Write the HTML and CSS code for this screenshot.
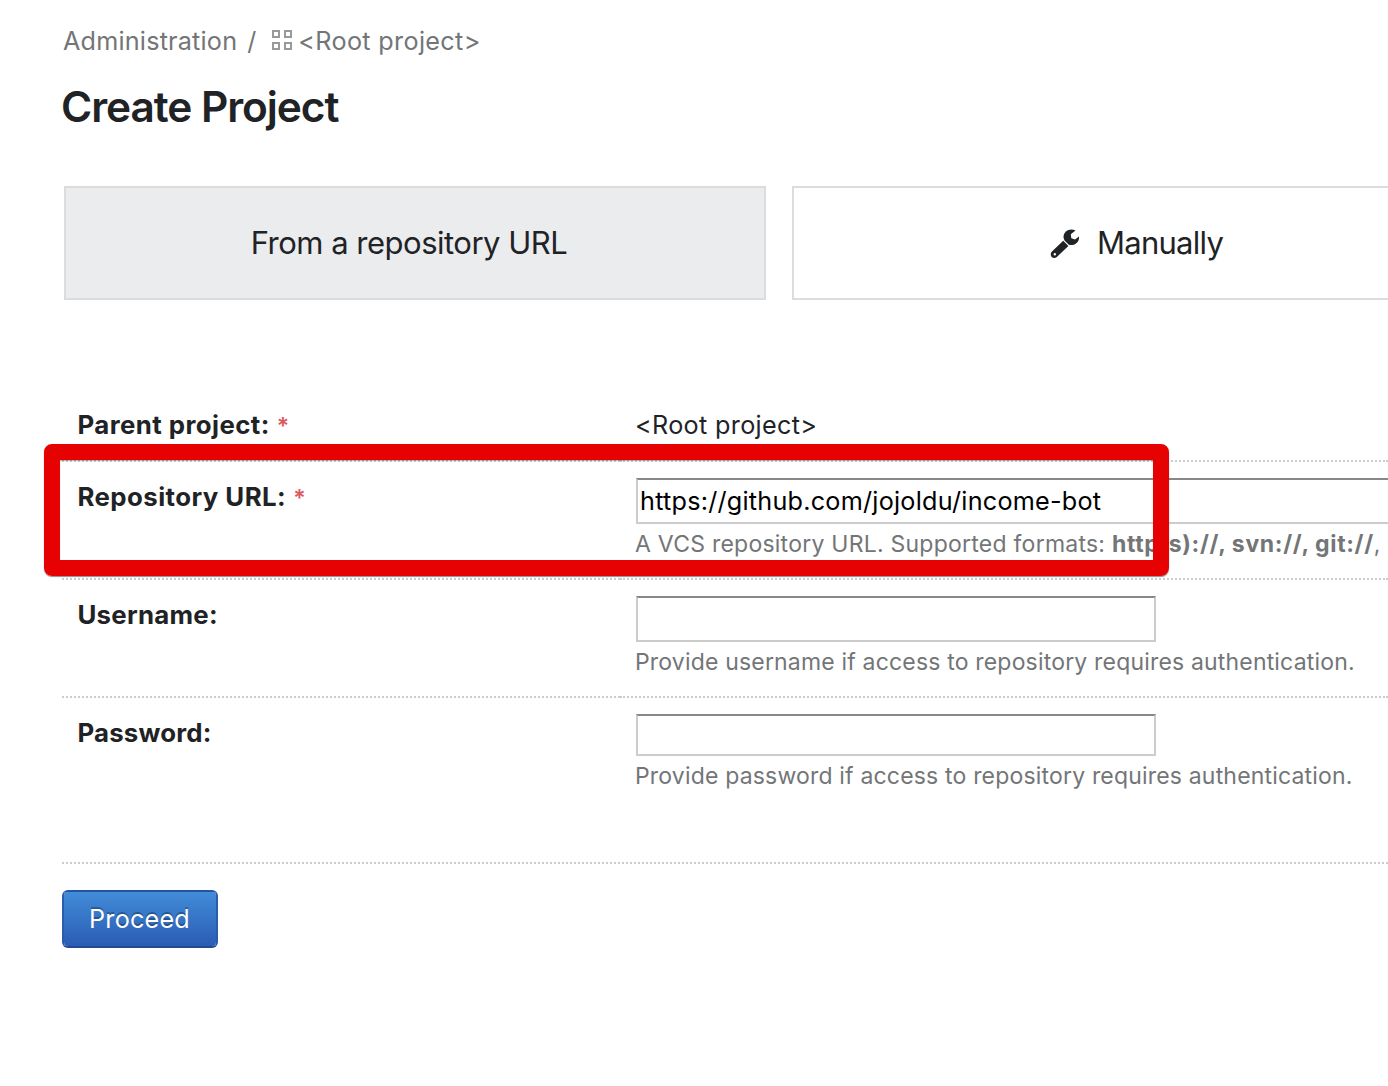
FILE: index.html
```html
<!DOCTYPE html>
<html lang="en">
<head>
<meta charset="utf-8">
<title>Create Project</title>
<link rel="stylesheet" href="styles.css">
</head>
<body>
<main class="page">
  <nav class="breadcrumbs">
    <a class="crumb crumb-admin">Administration</a>
    <span class="separator">/</span>
    <svg class="project-icon" width="22" height="22" viewBox="0 0 22 22" fill="none" stroke="#999" stroke-width="2"><path d="M2 2h6v6H2zM14 2h6v6h-6zM2 14h6v6H2zM14 14h6v6h-6z"/></svg>
    <a class="crumb crumb-root">&lt;Root project&gt;</a>
  </nav>
  <h1 class="title">Create Project</h1>
  <div class="modes">
    <a class="mode mode-selected"><span class="mode-url">From a repository URL</span></a>
    <a class="mode mode-manual">
      <svg class="wrench" width="30" height="30" viewBox="0 0 30 30"><path fill="#1f2326" fill-rule="evenodd" d="M13.200 11.800L18.400 16.900 6.600 28.200Q4 30 1.600 27.900-.2 25.200 1.700 22.800ZM4.800 24.100a1.200 1.200 0 1 0 0 2.400 1.200 1.200 0 0 0 0-2.400Z"/><path fill="#1f2326" d="M25.500 1.600C20-1.200 13.400 2 13.500 8.400L14.500 11.600 18.800 15.800C25 17.300 29.600 13 29 7.600L25 10.400 21.300 9.200 20.800 5.200Z"/></svg>
      <span class="mode-manual-text">Manually</span>
    </a>
  </div>
  <form class="form">
    <div class="row row-parent">
      <div class="label"><span class="t-parent">Parent project:</span><span class="required">*</span></div>
      <div class="value"><span class="parent-name">&lt;Root project&gt;</span></div>
    </div>
    <div class="row row-url">
      <div class="label"><span class="t-url">Repository URL:</span><span class="required">*</span></div>
      <div class="value">
        <input class="field field-url" type="text" value="https://github.com/jojoldu/income-bot">
        <div class="hint"><span class="hint-url">A VCS repository URL. Supported formats: </span><b class="formats">http(s)://, svn://, git://</b>,</div>
      </div>
    </div>
    <div class="row row-user">
      <div class="label"><span class="t-user">Username:</span></div>
      <div class="value">
        <input class="field" type="text">
        <div class="hint hint-user">Provide username if access to repository requires authentication.</div>
      </div>
    </div>
    <div class="row row-password">
      <div class="label"><span class="t-pass">Password:</span></div>
      <div class="value">
        <input class="field field-password" type="password">
        <div class="hint hint-password">Provide password if access to repository requires authentication.</div>
      </div>
    </div>
    <button class="proceed" type="button">Proceed</button>
    <div class="highlight"></div>
  </form>
</main>
</body>
</html>
```
FILE: styles.css
```css
* { box-sizing: border-box; }
body {
  margin: 0;
  height: 1086px;
  overflow: hidden;
  background: #fff;
  color: #1f2326;
  font: 25.2px/32px Inter, "Liberation Sans", sans-serif;
}
.page { width: 100%; height: 1086px; overflow: hidden; padding: 25px 0 0 62px; }
.breadcrumbs { display: flex; height: 32px; padding-left: 1px; color: #737577; }
.crumb-admin { letter-spacing: .2px; }
.crumb-root, .parent-name { letter-spacing: .33px; }
.parent-name { margin-left: -1px; }
.separator { margin-left: 10px; }
.project-icon { margin: 4px 5px 0 15px; }
.title { margin: 23px 0 0 -1px; height: 54px; font-size: 42.4px; line-height: 53px; font-weight: 600; letter-spacing: -1.05px; white-space: nowrap; }
.modes { display: flex; gap: 26px; margin: 52px 0 0 2px; }
.mode {
  display: flex;
  flex: none;
  justify-content: center;
  width: 702px;
  height: 114px;
  padding-right: 12px;
  border: 2px solid #dbdcdd;
  font-size: 31px;
  line-height: 110px;
  white-space: nowrap;
}
.mode-selected { background: #ebecee; }
.mode-url { letter-spacing: -.5px; }
.mode-manual-text { letter-spacing: -.75px; }
.mode-manual { justify-content: flex-start; padding-left: 256px; }
.wrench { margin: 41px 17px 0 0; flex: none; }
.form { position: relative; margin-top: 92px; }
.row { display: grid; grid-template-columns: 558px 1fr; }
.label, .value { min-width: 0; padding: 16px 0 0 16px; border-bottom: 2px dotted #ccc; white-space: nowrap; }
.label { padding-top: 19px; font-size: 25.8px; font-weight: 700; }
.row-parent { height: 70px; }
.row-parent .label, .row-parent .value { padding-top: 17px; }
.row-url, .row-user { height: 118px; }
.row-password { height: 166px; border-bottom: 2px dotted #ccc; }
.row-password .label, .row-password .value { border-bottom: 0; }
.t-parent, .t-url { margin-left: -.6px; letter-spacing: .44px; }
.t-user { margin-left: -.6px; letter-spacing: .27px; }
.t-pass { margin-left: -.6px; letter-spacing: .18px; }
.required { margin-left: 7px; color: #db5860; font-weight: 600; font-size: 23px; line-height: 0; }
.field {
  display: block;
  width: 520px;
  height: 46px;
  margin: 0;
  padding: 0 2px;
  border: 2px solid #ccc;
  border-top-color: #888;
  background: #fff;
  color: #000;
  font: inherit;
  letter-spacing: .24px;
}
.field-url { width: 820px; }
.field-password { height: 42px; }
.hint { margin: 4px 0 0 -1px; color: #737577; font-size: 23px; line-height: 32px; }
.hint-url { letter-spacing: .24px; }
.formats { letter-spacing: .65px; }
.hint-user, .hint-password { letter-spacing: .18px; }
.proceed {
  display: block;
  width: 156px;
  height: 58px;
  margin-top: 26px;
  padding: 0 1px 1px 0;
  border: 2px solid;
  border-color: #2455a5 #2a5cab #234b91;
  border-radius: 6px;
  background: linear-gradient(#418cd8, #2b5cb4) padding-box;
  color: #fff;
  font: inherit;
  letter-spacing: .2px;
  text-shadow: 0 -2px 0 rgba(0, 0, 0, .3);
}
.highlight {
  position: absolute;
  left: -18px;
  top: 52px;
  width: 1125px;
  height: 132px;
  border: 16px solid #e60202;
  border-radius: 8px;
  box-shadow: 0 1px 1px rgba(0, 0, 0, .45), inset 0 1px 1px rgba(0, 0, 0, .3);
}
```
